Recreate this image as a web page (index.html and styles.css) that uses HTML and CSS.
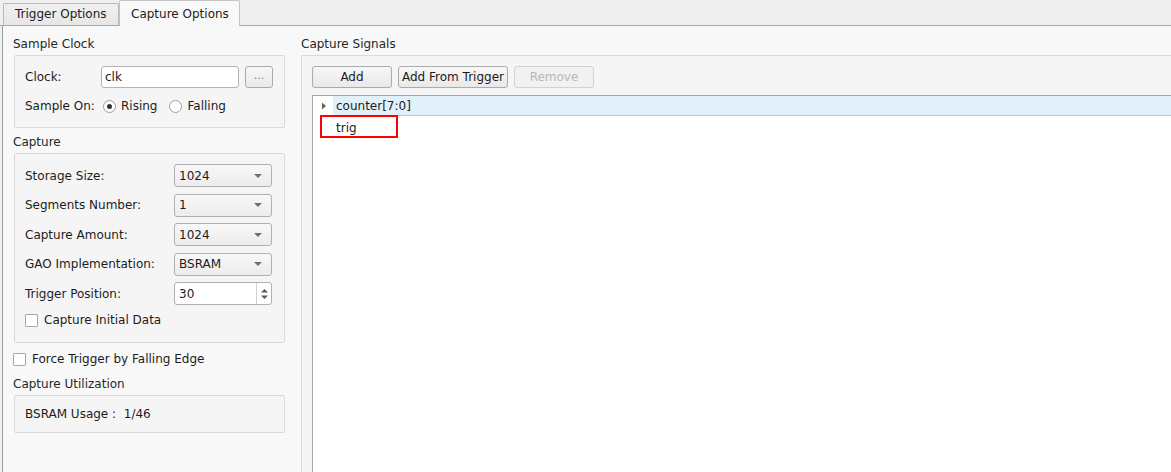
FILE: index.html
```html
<!DOCTYPE html>
<html lang="en">
<head>
    <meta charset="UTF-8">
    <title>Capture Options</title>
    <link rel="stylesheet" href="styles.css">
</head>
<body>
    <div class="tabbar">
        <div class="tab">Trigger Options</div>
        <div class="tab active">Capture Options</div>
    </div>
    <div class="pane">
        <div class="left">
            <div class="title first">Sample Clock</div>
            <div class="group clock">
                <div class="row">
                    <span class="lbl-clock">Clock:</span>
                    <div class="input clk">clk</div>
                    <div class="btn dots">...</div>
                </div>
                <div class="row radios">
                    <span class="lbl-sample">Sample On:</span>
                    <span class="radio on"></span><span class="opt">Rising</span>
                    <span class="radio"></span><span class="opt">Falling</span>
                </div>
            </div>

            <div class="title">Capture</div>
            <div class="group capture">
                <div class="form">
                    <span>Storage Size:</span>
                    <div class="combo">1024<span class="arrow"></span></div>
                    <span>Segments Number:</span>
                    <div class="combo">1<span class="arrow"></span></div>
                    <span>Capture Amount:</span>
                    <div class="combo">1024<span class="arrow"></span></div>
                    <span>GAO Implementation:</span>
                    <div class="combo">BSRAM<span class="arrow"></span></div>
                    <span>Trigger Position:</span>
                    <div class="spin">30
                        <span class="spin-btns">
                            <svg width="9" height="14" viewBox="0 0 9 14"><path d="M1 5.5 L4.5 2 L8 5.5 Z" fill="#5a5a5a"/><path d="M1 8.5 L4.5 12 L8 8.5 Z" fill="#5a5a5a"/></svg>
                        </span>
                    </div>
                </div>
                <div class="check-row inner"><span class="check"></span>Capture Initial Data</div>
            </div>

            <div class="check-row force"><span class="check"></span>Force Trigger by Falling Edge</div>

            <div class="title util">Capture Utilization</div>
            <div class="group usage">BSRAM Usage :&nbsp; 1/46</div>
        </div>

        <div class="right">
            <div class="title first sig">Capture Signals</div>
            <div class="group signals">
                <div class="buttons">
                    <div class="btn wide">Add</div>
                    <div class="btn from">Add From Trigger</div>
                    <div class="btn wide disabled">Remove</div>
                </div>
                <div class="tree">
                    <div class="node">
                        <span class="branch"><svg width="6" height="8" viewBox="0 0 6 8"><path d="M1 0.5 L5 4 L1 7.5 Z" fill="#666"/></svg></span>
                        <span class="item sel">counter[7:0]</span>
                    </div>
                    <div class="node">
                        <span class="branch"></span>
                        <span class="item">trig</span>
                        <span class="mark"></span>
                    </div>
                </div>
            </div>
        </div>
    </div>
</body>
</html>
```

FILE: styles.css
```css
html, body {
    margin: 0;
    height: 100%;
    overflow: hidden;
}
body {
    font-family: "DejaVu Sans", sans-serif;
    font-size: 12px;
    line-height: 14px;
    color: #1c1c1c;
    background: #efefef;
}

.tabbar {
    display: flex;
    align-items: flex-end;
    height: 26px;
    box-sizing: border-box;
    padding-left: 3px;
    border-bottom: 1px solid #a9a9a9;
}
.tab {
    height: 22px;
    box-sizing: border-box;
    padding: 3px 11px 0 11px;
    width: 116px;
    background: linear-gradient(#f0f0f0, #e6e6e6);
    border: 1px solid #b9b9b9;
    border-bottom: none;
    border-radius: 2px 2px 0 0;
}
.tab.active {
    height: 26px;
    width: 121px;
    margin-bottom: -1px;
    padding: 6px 0 0 11px;
    background: #f8f8f8;
    border-color: #c4c4c4;
    position: relative;
}

.pane {
    display: flex;
    height: 446px;
    margin-left: 2px;
    border-left: 1px solid #9e9e9e;
    background: #f8f8f8;
}

.left {
    width: 298px;
    flex: none;
    padding-left: 10px;
    box-sizing: border-box;
}
.title {
    margin: 7px 0 4px 0;
    color: #262626;
}
.title.first {
    margin-top: 11px;
}
.title.util {
    margin-top: 9px;
}

.group {
    margin-left: 1px;
    width: 271px;
    box-sizing: border-box;
    border: 1px solid #dadada;
    border-radius: 2px;
    background: #f5f5f5;
}

.clock {
    padding: 10px 10px 11px 10px;
}
.row {
    display: flex;
    align-items: center;
}
.row > * {
    flex: none;
}
.lbl-clock {
    width: 76px;
}
.input {
    width: 138px;
    height: 22px;
    box-sizing: border-box;
    padding: 3px 3px;
    background: #fff;
    border: 1px solid #b4b4b4;
    border-radius: 3px;
}
.btn {
    height: 22px;
    box-sizing: border-box;
    border: 1px solid #ababab;
    border-radius: 3px;
    background: linear-gradient(#f7f7f7, #e9e9e9);
    text-align: center;
    padding-top: 3px;
}
.dots {
    width: 28px;
    margin-left: 6px;
    color: #777;
    font-size: 11px;
    padding-top: 2px;
}
.radios {
    margin-top: 8px;
    height: 20px;
}
.lbl-sample {
    width: 78px;
}
.radio {
    width: 13px;
    height: 13px;
    box-sizing: border-box;
    border: 1px solid #9d9d9d;
    border-radius: 50%;
    background: #fff;
    display: flex;
    align-items: center;
    justify-content: center;
}
.radio.on::after {
    content: "";
    width: 5px;
    height: 5px;
    border-radius: 50%;
    background: #333;
}
.opt {
    margin-left: 5px;
    margin-right: 12px;
}

.capture {
    padding: 10px 12px 13px 10px;
}
.form {
    display: grid;
    grid-template-columns: 149px 98px;
    grid-auto-rows: 23px;
    row-gap: 6.5px;
    align-items: center;
}
.combo, .spin {
    height: 23px;
    box-sizing: border-box;
    border: 1px solid #b0b0b0;
    border-radius: 3px;
    padding: 4px 4px;
    display: flex;
    align-items: center;
}
.combo {
    background: linear-gradient(#f8f8f8, #ececec);
}
.arrow {
    margin-left: auto;
    margin-right: 5px;
    width: 0;
    height: 0;
    border-left: 4px solid transparent;
    border-right: 4px solid transparent;
    border-top: 4px solid #707070;
}
.spin {
    background: #fff;
    padding-right: 0;
}
.spin-btns {
    margin-left: auto;
    width: 14px;
    height: 21px;
    border-left: 1px solid #d0d0d0;
    display: flex;
    align-items: center;
    justify-content: center;
}

.check-row {
    display: flex;
    align-items: center;
    height: 18px;
}
.check {
    width: 13px;
    height: 13px;
    box-sizing: border-box;
    border: 1px solid #a8a8a8;
    border-radius: 1px;
    background: #fff;
    margin-right: 6px;
}
.check-row.inner {
    margin-top: 6px;
}
.check-row.force {
    margin-top: 7px;
}

.usage {
    padding: 11px 10px;
}

.right {
    flex: 1;
    display: flex;
    flex-direction: column;
}
.signals {
    flex: 1;
    width: auto;
    margin-left: 0;
    border-right: none;
    border-bottom: none;
    border-radius: 2px 0 0 0;
    padding: 10px 0 0 10px;
    display: flex;
    flex-direction: column;
}
.buttons {
    display: flex;
    gap: 6px;
}
.wide {
    width: 80px;
}
.from {
    width: 110px;
}
.btn.disabled {
    color: #b8b8b8;
    border-color: #d2d2d2;
    background: #f1f1f1;
}

.tree {
    flex: 1;
    margin-top: 7px;
    background: #fff;
    border-top: 1px solid #a6a6a6;
    border-left: 1px solid #a6a6a6;
}
.node {
    display: flex;
    height: 20px;
    align-items: center;
    position: relative;
}
.node + .node {
    height: 22px;
}
.branch {
    width: 20px;
    flex: none;
    display: flex;
    justify-content: center;
    padding-left: 1px;
    box-sizing: border-box;
}
.item {
    padding: 1px 0 0 3px;
    flex: 1;
    height: 100%;
    box-sizing: border-box;
    display: flex;
    align-items: center;
}
.item.sel {
    background: #e2f0f9;
    border-bottom: 1px solid #b6c7d2;
}
.mark {
    position: absolute;
    left: 7px;
    top: -1px;
    width: 78px;
    height: 23px;
    box-sizing: border-box;
    border: 2px solid #f00;
}
```
